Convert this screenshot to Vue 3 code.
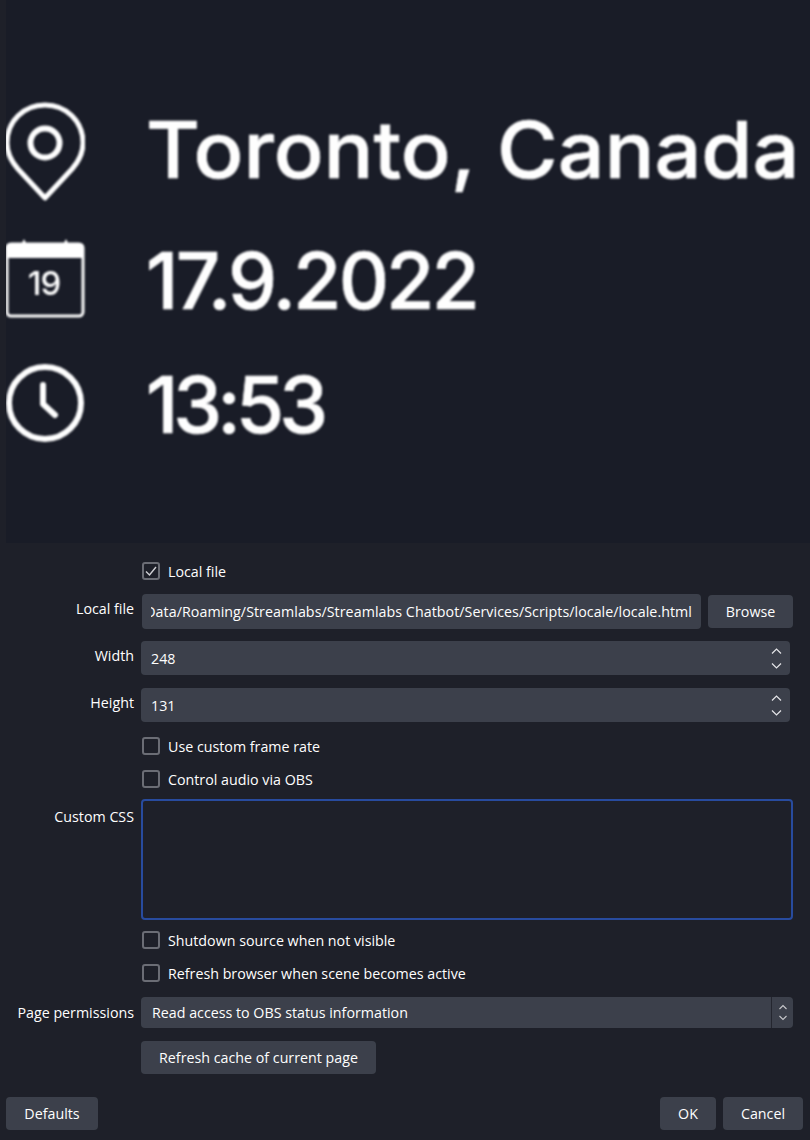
<script setup>
const info = [
  { id: 'pin', text: 'Toronto, Canada' },
  { id: 'cal', text: '17.9.2022' },
  { id: 'clock', text: '13:53' }
]
const path = 'Data/Roaming/Streamlabs/Streamlabs Chatbot/Services/Scripts/locale/locale.html'
</script>

<template>
  <div class="dialog">
    <section class="preview">
      <div v-for="row in info" :key="row.id" class="info" :class="row.id">
        <svg v-if="row.id === 'pin'" class="icon" width="80" height="100" viewBox="0 0 80 100" fill="none" stroke="#fff">
          <path d="M40 96 L13 67 C6 59 2 51 2 41 C2 19 19 3 40 3 C61 3 78 19 78 41 C78 51 74 59 67 67 Z" stroke-width="5" stroke-linejoin="round" />
          <circle cx="40" cy="41" r="14.5" stroke-width="6" />
        </svg>
        <svg v-else-if="row.id === 'cal'" class="icon" width="80" height="80" viewBox="0 0 80 80" fill="none">
          <rect x="2" y="6" width="76" height="72" rx="4" stroke="#fff" stroke-width="3" />
          <path d="M1 20 V10 C1 7 3 5 6 5 H17 L19 1 L21 5 H59 L61 1 L63 5 H74 C77 5 79 7 79 10 V20 Z" fill="#fff" />
          <text x="39" y="57" text-anchor="middle" fill="#fff" class="day">19</text>
        </svg>
        <svg v-else class="icon" width="80" height="80" viewBox="0 0 80 80" fill="none" stroke="#fff" stroke-linecap="round" stroke-linejoin="round">
          <circle cx="40" cy="40" r="36" stroke-width="6" />
          <path d="M38 22 V41 L50 52" stroke-width="6" />
        </svg>
        <span class="label">{{ row.text }}</span>
      </div>
    </section>

    <form class="form" @submit.prevent>
      <label class="check first"><span class="box"><svg width="14" height="14" viewBox="0 0 14 14" fill="none"><path d="M2 7.5 L5.5 11 L12 3" stroke="#d0d0d4" stroke-width="1.4" /></svg></span>Local file</label>

      <div class="row file-row">
        <span class="cap">Local file</span>
        <div class="field file"><div class="file-clip"><span class="file-text">{{ path }}</span></div></div>
        <button class="btn browse" type="button">Browse</button>
      </div>

      <div class="row spin-row">
        <span class="cap">Width</span>
        <div class="field spin">248
          <span class="arrows"><svg width="13" height="25" viewBox="0 0 13 25" fill="none" stroke="#e4e4e8" stroke-width="1.2"><path d="M2 7.5 L6.5 3 L11 7.5" /><path d="M2 17.5 L6.5 22 L11 17.5" /></svg></span>
        </div>
      </div>
      <div class="row spin-row second">
        <span class="cap">Height</span>
        <div class="field spin">131
          <span class="arrows"><svg width="13" height="25" viewBox="0 0 13 25" fill="none" stroke="#e4e4e8" stroke-width="1.2"><path d="M2 7.5 L6.5 3 L11 7.5" /><path d="M2 17.5 L6.5 22 L11 17.5" /></svg></span>
        </div>
      </div>

      <label class="check frame"><span class="box"></span>Use custom frame rate</label>
      <label class="check audio"><span class="box"></span>Control audio via OBS</label>

      <div class="row css-row">
        <span class="cap">Custom CSS</span>
        <div class="area"></div>
      </div>

      <label class="check shutdown"><span class="box"></span>Shutdown source when not visible</label>
      <label class="check refresh"><span class="box"></span>Refresh browser when scene becomes active</label>

      <div class="row perm-row">
        <span class="cap">Page permissions</span>
        <div class="field select">
          <span class="select-text">Read access to OBS status information</span>
          <span class="select-arrows"><svg width="10" height="17" viewBox="0 0 10 17" fill="none" stroke="#c8c8cc" stroke-width="1.1"><path d="M1.5 5 L5 1.5 L8.5 5" /><path d="M1.5 12 L5 15.5 L8.5 12" /></svg></span>
        </div>
      </div>

      <button class="btn cache" type="button">Refresh cache of current page</button>

      <div class="footer">
        <button class="btn defaults" type="button">Defaults</button>
        <div class="actions">
          <button class="btn ok" type="button">OK</button>
          <button class="btn cancel" type="button">Cancel</button>
        </div>
      </div>
    </form>
  </div>
</template>

<style>
html, body { margin: 0; background: #1e2029; }
</style>

<style scoped>
.dialog {
  width: 810px;
  height: 1140px;
  overflow: hidden;
  background: #1e2029;
  color: #fefefe;
  font-family: "Open Sans", "Noto Sans", sans-serif;
  font-size: 14.25px;
}
.preview {
  height: 543px;
  margin-left: 6px;
  background: #191c27;
  overflow: hidden;
}
.info {
  display: flex;
  align-items: center;
  gap: 61px;
  filter: blur(1.1px);
  height: 100px;
  white-space: nowrap;
}
.info.pin { margin-top: 102px; }
.info.cal { margin-top: 29px; }
.info.clock { margin-top: 22px; }
.cal .icon { margin-top: -6px; }
.icon { flex: none; margin-left: -1px; }
.label {
  font-family: Inter, "Open Sans", sans-serif;
  font-size: 78px;
  font-weight: 500;
  line-height: 100px;
  transform-origin: left center;
  -webkit-text-stroke: 0.7px #fefefe;
}
.pin .label { transform: scaleX(1.06); margin-top: -4px; }
.cal .label { letter-spacing: -2.7px; }
.clock .label { letter-spacing: -5px; margin-top: 4px; }
.day { font-family: Inter, sans-serif; font-size: 33px; font-weight: 500; letter-spacing: -1px; }

.check {
  display: flex;
  align-items: center;
  gap: 8px;
  height: 20px;
  margin-left: 142px;
  white-space: nowrap;
}
.box {
  box-sizing: border-box;
  width: 18px;
  height: 18px;
  border: 2px solid #6b6d75;
  border-radius: 3px;
  display: flex;
  align-items: center;
  justify-content: center;
  flex: none;
}
.first { margin-top: 18px; }
.row { display: flex; align-items: flex-start; }
.cap {
  flex: none;
  width: 134px;
  padding-right: 7px;
  text-align: right;
  white-space: nowrap;
}
.field {
  box-sizing: border-box;
  background: #3c404b;
  border-radius: 4px;
  display: flex;
  align-items: center;
}
.file-row { margin-top: 13px; }
.file-row .cap { line-height: 30px; }
.file {
  width: 559px;
  height: 35px;
  margin-left: 1px;
  padding: 0 9px;
}
.file-clip {
  flex: 1;
  min-width: 0;
  overflow: hidden;
  display: flex;
  justify-content: flex-end;
}
.file-text { white-space: nowrap; flex: none; letter-spacing: 0.05px; }
.btn {
  box-sizing: border-box;
  background: #3c404b;
  border: none;
  border-radius: 4px;
  color: #fefefe;
  font: inherit;
  padding: 0;
  display: block;
}
.browse { width: 85px; height: 33px; margin: 1px 0 0 7px; }
.spin-row { margin-top: 12px; }
.spin-row.second { margin-top: 13px; }
.spin-row .cap { line-height: 30px; }
.spin {
  width: 649px;
  height: 34px;
  padding: 0 10px;
  justify-content: space-between;
}
.arrows { display: flex; margin-right: -3px; }
.frame { margin-top: 14px; }
.audio { margin-top: 13px; }
.css-row { margin-top: 10px; }
.css-row .cap { line-height: 35px; }
.area {
  box-sizing: border-box;
  width: 652px;
  height: 121px;
  border: 2px solid #284b9e;
  border-radius: 4px;
}
.shutdown { margin-top: 10px; }
.refresh { margin-top: 13px; }
.perm-row { margin-top: 14px; }
.perm-row .cap { line-height: 31px; }
.select {
  width: 652px;
  height: 31px;
  padding-left: 11px;
  justify-content: space-between;
}
.select-arrows {
  width: 22px;
  height: 31px;
  border-left: 1px solid #24262f;
  display: flex;
  align-items: center;
  justify-content: center;
  box-sizing: border-box;
}
.cache { width: 235px; height: 33px; margin: 13px 0 0 141px; }
.footer {
  display: flex;
  justify-content: space-between;
  margin: 23px 7px 0 6px;
}
.actions { display: flex; gap: 7px; }
.defaults { width: 92px; height: 33px; }
.ok { width: 56px; height: 33px; }
.cancel { width: 80px; height: 33px; }
</style>
